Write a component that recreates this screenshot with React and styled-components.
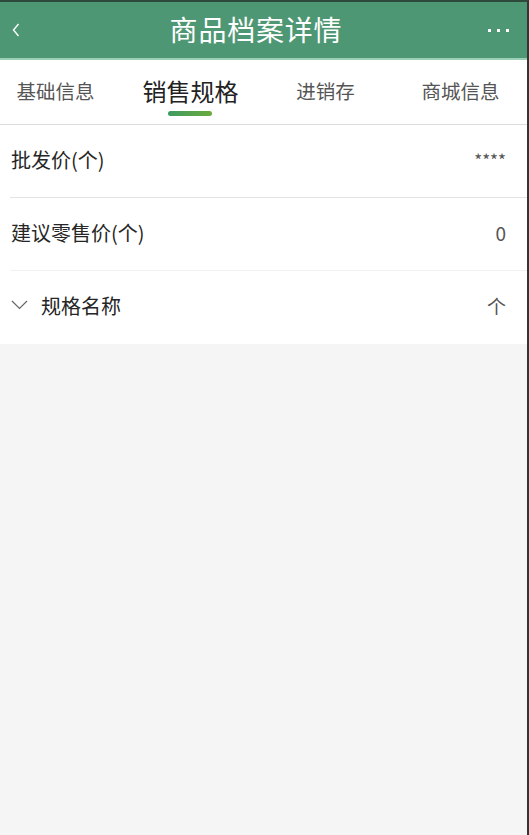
import React, { useState } from 'react';
import styled, { createGlobalStyle } from 'styled-components';

const GlobalStyle = createGlobalStyle`
  html, body {
    margin: 0;
    padding: 0;
    background: #f5f5f5;
  }
  body {
    font-family: "Noto Sans CJK SC", "Noto Sans", sans-serif;
  }
`;

const Page = styled.div`
  width: 529px;
  height: 835px;
  box-sizing: border-box;
  border-top: 2px solid #2e4a3d;
  border-right: 2px solid #353535;
  background: #f5f5f5;
  overflow: hidden;
`;

const Header = styled.header`
  height: 56px;
  background: #4e9774;
  border-bottom: 2px solid #9ccfb5;
  display: flex;
  align-items: center;
  justify-content: space-between;
  padding: 0 18px 0 12px;
  color: #fff;
`;

const IconButton = styled.button`
  background: none;
  border: none;
  padding: 0;
  width: 24px;
  height: 24px;
  display: flex;
  align-items: center;
  justify-content: flex-start;
  color: #fff;
`;

const Title = styled.h1`
  margin: 0 0 2px;
  font-size: 28px;
  font-weight: 400;
  letter-spacing: 0.8px;
  transform: translateX(-6px);
`;

const TabBar = styled.nav`
  height: 64px;
  background: #fff;
  border-bottom: 1px solid #dcdcdc;
  display: flex;
  margin-left: -12px;
`;

const Tab = styled.div`
  position: relative;
  flex: 0 0 135px;
  display: flex;
  align-items: center;
  justify-content: center;
  padding-bottom: 4px;
  font-size: ${p => (p.$active ? '24px' : '19.5px')};
  color: ${p => (p.$active ? '#222' : '#555')};
`;

const Indicator = styled.span`
  position: absolute;
  left: 50%;
  bottom: 8px;
  width: 44px;
  height: 5px;
  margin-left: -23px;
  border-radius: 3px;
  background: linear-gradient(90deg, #3f9a62, #6cab3b);
`;

const List = styled.section`
  background: #fff;
`;

const Row = styled.div`
  height: 72px;
  display: flex;
  align-items: center;
  justify-content: space-between;
  margin-left: 10px;
  padding: 0 21px 4px 1px;
  box-sizing: border-box;
  height: 73px;
  border-bottom: 1px solid ${p => p.$divider || 'transparent'};
  font-size: 20px;
  color: #262626;
`;

const Label = styled.span`
  display: flex;
  align-items: center;
  gap: 13px;
`;

const Value = styled.span`
  color: #555;
  font-size: ${p => (p.$small ? '17px' : '19px')};
`;

const Dots = styled.span`
  display: flex;
  gap: 6px;
`;

const Dot = styled.span`
  width: 3px;
  height: 3px;
  background: #fff;
`;

const tabs = ['基础信息', '销售规格', '进销存', '商城信息'];

export default function App() {
  const [active, setActive] = useState(1);

  return (
    <>
      <GlobalStyle />
      <Page>
        <Header>
          <IconButton aria-label="back">
            <svg width="8" height="14" viewBox="0 0 8 14">
              <path d="M6.5 1 L1.5 7 L6.5 13" fill="none" stroke="#fff" strokeWidth="1.4" />
            </svg>
          </IconButton>
          <Title>商品档案详情</Title>
          <Dots>
            <Dot />
            <Dot />
            <Dot />
          </Dots>
        </Header>

        <TabBar>
          {tabs.map((t, i) => (
            <Tab key={t} $active={i === active} onClick={() => setActive(i)}>
              {t}
              {i === active && <Indicator />}
            </Tab>
          ))}
        </TabBar>

        <List>
          <Row $divider="#e3e3e3">
            <Label>批发价(个)</Label>
            <Value $small>****</Value>
          </Row>
          <Row $divider="#f1f1f1">
            <Label>建议零售价(个)</Label>
            <Value>0</Value>
          </Row>
          <Row>
            <Label>
              <svg width="17" height="10" viewBox="0 0 17 10">
                <path d="M1 1 L8.5 8.5 L16 1" fill="none" stroke="#666" strokeWidth="1.2" />
              </svg>
              规格名称
            </Label>
            <Value>个</Value>
          </Row>
        </List>
      </Page>
    </>
  );
}
